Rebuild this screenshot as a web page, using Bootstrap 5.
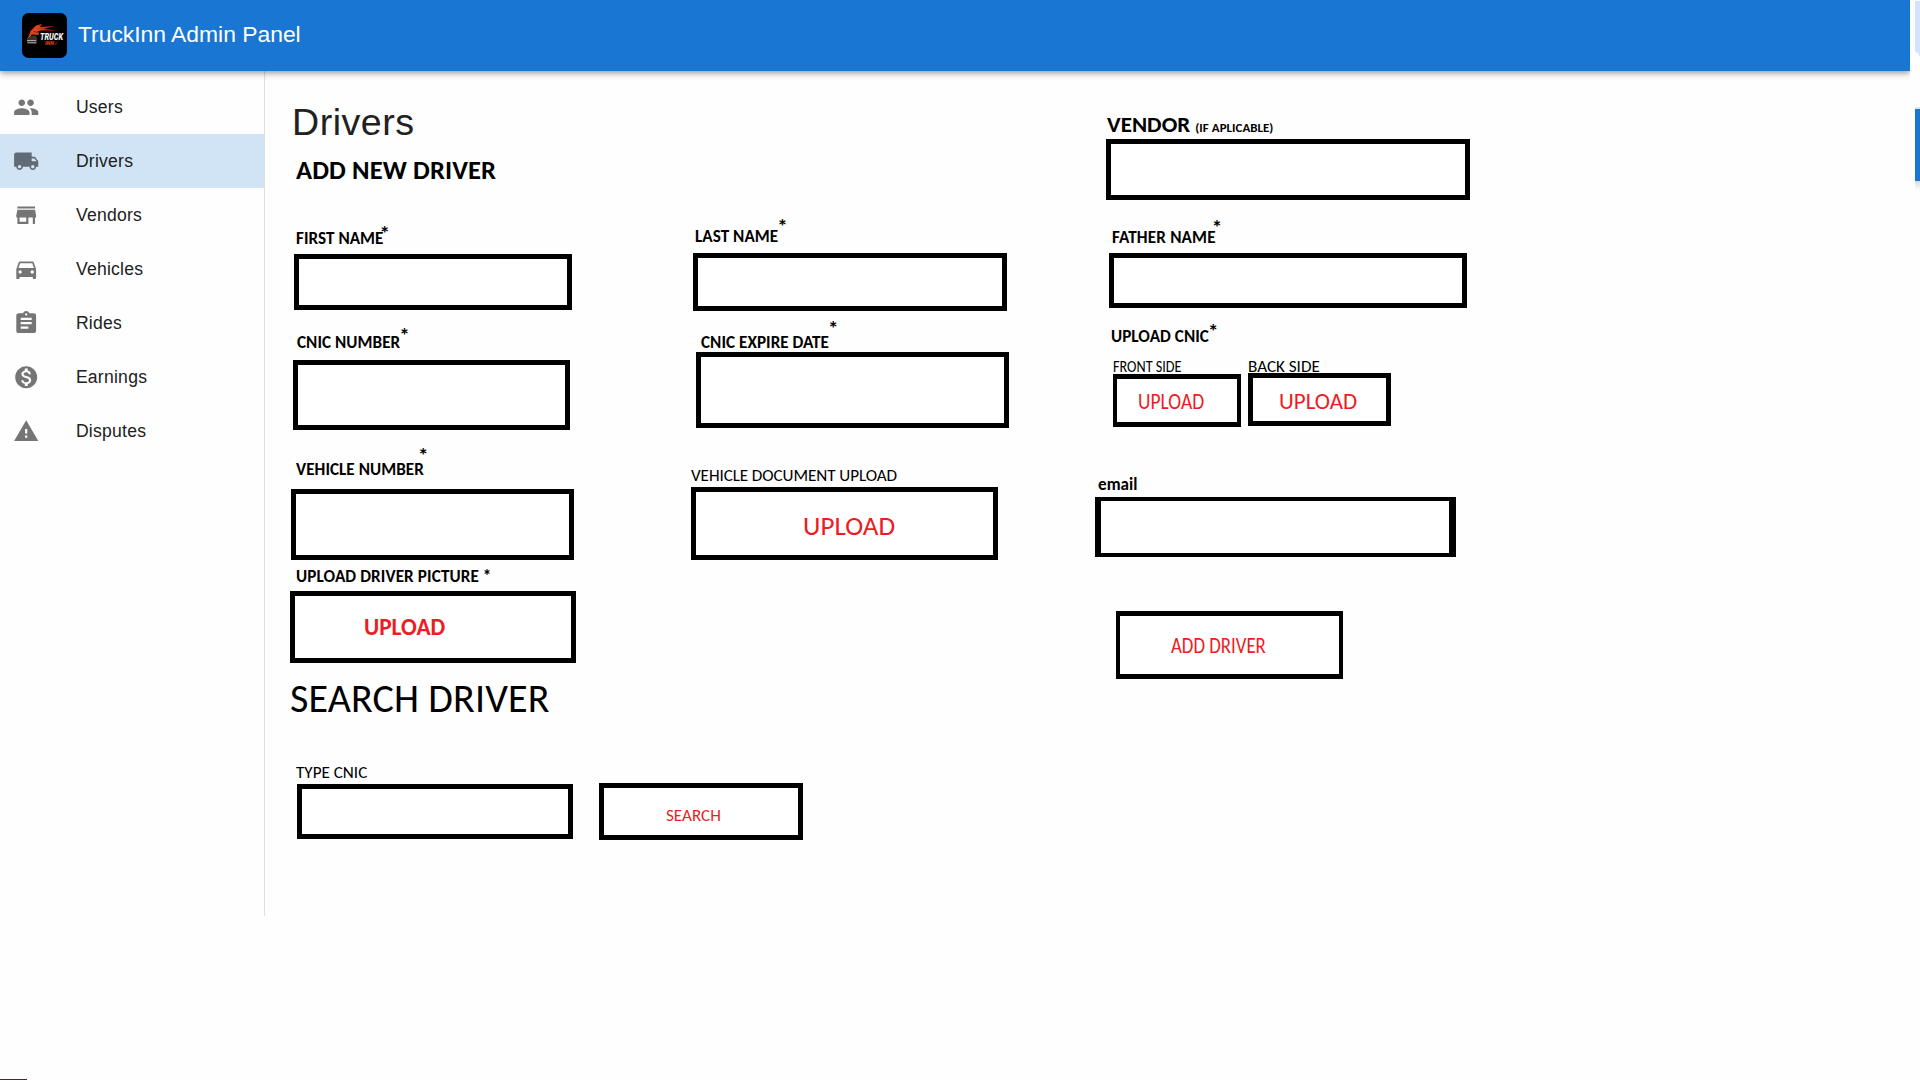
<!DOCTYPE html>
<html lang="en">
<head>
<meta charset="utf-8">
<meta name="viewport" content="width=device-width, initial-scale=1">
<title>TruckInn Admin Panel</title>
<link href="https://cdn.jsdelivr.net/npm/bootstrap@5.3.0/dist/css/bootstrap.min.css" rel="stylesheet">
<style>
  body { font-family: "Liberation Sans", Arial, sans-serif; background: #fefefe; color: #212121; height: 1080px; overflow: hidden; line-height: 1.5; }
  .page { height: 1079px; }
  .frame { width: 1910px; }
  .topbar { height: 71px; padding: 0 0 0 22px; background: #1976d2; box-shadow: 0 2px 4px -1px rgba(0,0,0,.2), 0 4px 5px rgba(0,0,0,.14), 0 1px 10px rgba(0,0,0,.12); z-index: 2; clip-path: inset(0 0 -14px 0); }
  .topbar svg { width: 45px; height: 45px; }
  .topbar .navbar-brand { font-size: 22.9px; letter-spacing: -.02px; margin: 0 0 4px 11px; padding: 0; line-height: 32px; }
  .side { width: 265px; height: 845px; border-right: 1px solid #dedede; padding-top: 9px; }
  .side .nav-link { height: 54px; padding: 0 0 0 13px; gap: 36.5px; color: #212121; font-size: 17.6px; letter-spacing: .23px; }
  .side .nav-link.active { background: #d1e4f6; }
  .side svg { width: 26.4px; height: 26.4px; margin-top: 1px; fill: #757575; }
  .side .active svg { fill: #616b75; }

  .form-area { padding-left: 25px; font-family: Carlito, Calibri, Lato, sans-serif; color: #000; }
  .col-one { width: 401px; }
  .col-two { width: 404px; }
  .page-title { font: 400 37.6px/44px "Liberation Sans", Arial, sans-serif; letter-spacing: .5px; color: #212121; margin: 29px 0 0 2px; }
  .section-title { font-size: 26.6px; line-height: 30px; letter-spacing: .1px; margin: 11px 0 0 6px; font-weight: 700; }
  .search-title { font-size: 40px; line-height: 42px; letter-spacing: .15px; margin: 15px 0 0 0; font-weight: 400; }
  .fl { display: flex; align-items: baseline; height: 16px; padding-top: 1px; font-size: 17.1px; line-height: 16px; letter-spacing: .05px; white-space: nowrap; font-weight: 700; }
  .fl.thin { font-weight: 400; letter-spacing: 0; }
  .fl sup { align-self: flex-start; font-size: 21px; line-height: 16px; top: 0; margin: -6px 0 0 -1px; }
  .box { display: block; border: 5px solid #000; border-radius: 0; background: #fff; padding: 0; text-align: left; line-height: 1; color: #ed1c24; white-space: nowrap; }
  .narrow { display: inline-block; transform-origin: 0 50%; }

  .l-first { margin: 45px 0 8px 6px; }      .b-first { width: 278px; height: 56px; margin-left: 4px; }
  .l-cnic { margin: 24px 0 10px 7px; }      .b-cnic { width: 277px; height: 70px; margin-left: 3px; }
  .l-vnum { margin: 31px 0 12px 6px; }      .b-vnum { width: 283px; height: 71px; margin-left: 1px; }
  .l-pic { margin: 8px 0 7px 6px; letter-spacing: .1px; }
  .b-pic { width: 286px; height: 72px; padding: 2px 0 0 69px; font-size: 23.3px; font-weight: 700; }
  .l-type { margin: 44px 0 4px 6px; }
  .b-type { width: 276px; height: 55px; margin-left: 7px; }
  .l-first sup { margin-left: -4px; }
  .l-cnic sup { margin-top: -8px; }
  .l-vnum sup { margin: -15px 0 0 -6px; }
  .search-row { width: 513px; }
  .b-search { width: 204px; height: 57px; margin-top: -1px; padding: 8px 0 0 62px; font-size: 17.1px; }

  .l-last { margin: 157px 0 9px 4px; }      .b-last { width: 314px; height: 58px; margin-left: 2px; }
  .l-exp { margin: 23px 0 2px 10px; }       .b-exp { width: 313px; height: 76px; margin-left: 5px; }
  .l-doc { margin: 39px 0 4px 0; }          .b-doc { width: 307px; height: 73px; padding: 4px 0 0 107px; font-size: 27.1px; }
  .fl.l-doc { letter-spacing: -.08px; }
  .l-last sup { margin-top: -11px; }
  .l-exp sup { margin-top: -15px; }

  .l-vendor { font-size: 23px; height: 22px; line-height: 22px; padding-top: 0; margin: 42px 0 4px 12px; }
  .l-vendor small { font-size: 12.9px; font-weight: 700; margin-left: 5px; }
  .b-vendor { width: 364px; height: 61px; margin-left: 11px; }
  .l-father { margin: 29px 0 8px 17px; letter-spacing: .17px; }
  .b-father { width: 358px; height: 55px; margin-left: 14px; }
  .l-father sup { margin: -11px 0 0 -4px; }
  .l-upcnic { margin: 20px 0 16px 16px; }
  .sides { margin-left: 18px; gap: 7px; }
  .sides .fl { height: 12px; line-height: 12px; margin-bottom: 2px; }
  .l-front .narrow { transform: scaleX(.83); }
  .b-front { width: 128px; height: 53px; border-width: 5px 4px; padding: 2px 0 0 21px; font-size: 23px; }
  .b-front .narrow { transform: scaleX(.845); }
  .b-back { width: 143px; height: 53px; margin-top: -1px; padding: 4px 0 0 26px; font-size: 23px; }
  .l-email { margin: 49px 0 5px 3px; }      .b-email { width: 361px; height: 60px; border-width: 4px 7px 4px 6px; }
  .b-add { width: 227px; height: 68px; border-width: 5px 4px; margin: 54px 0 0 21px; padding: 0 0 0 51px; font-size: 23px; }
  .b-add .narrow { transform: scaleX(.817); }

  .edge { width: 5px; }
  .edge-tab { height: 56px; margin-top: 1px; background: #d3e3fd; clip-path: polygon(0 0, 100% 0, 100% 100%, 60% 93%, 0 90%); }
  .edge-line { height: 2px; margin-top: 50px; background: #dfe3e3; }
  .edge-bar { height: 72px; background: #1976d2; box-shadow: 0 4px 6px rgba(0,0,0,.3); clip-path: inset(0 0 -12px 0); }
  .foot-mark { width: 27px; height: 1px; background: #3b2e2b; }
</style>
<script src="https://cdn.jsdelivr.net/npm/bootstrap@5.3.0/dist/js/bootstrap.bundle.min.js"></script>
</head>
<body>
<div class="page d-flex justify-content-between">
  <div class="frame d-flex flex-column">
    <nav class="topbar navbar navbar-dark justify-content-start flex-shrink-0 position-relative">
      <svg viewBox="0 0 45 45" aria-label="Truck Inn">
        <defs><linearGradient id="fl" x1="0" x2="1"><stop offset="0" stop-color="#f0501c"/><stop offset="1" stop-color="#7a140c"/></linearGradient></defs>
        <rect width="45" height="45" rx="6.5" fill="#000"/>
        <path d="M10 17.5 14 12.5 20 11 18 14 33 13 22 16 37 17.5 19 17.5 14 19z" fill="url(#fl)"/>
        <path d="M6.500 24 8.500 18 13.500 13 12 19 17 19.500 16.500 22 10 21.500z" fill="#d8401a"/>
        <path d="M5 25 8 23 14 22.500 15.500 27 14 31 5 30z" fill="#3a3332"/>
        <path d="M5 27.500h9M5.500 29.800h9" stroke="#b9b4b2" stroke-width=".9"/>
        <path d="M6.500 24.500 9 22" stroke="#d95b38" stroke-width="1"/>
        <text x="18" y="26.500" font-family="Roboto, sans-serif" font-size="8.600" font-weight="900" font-style="italic" fill="#f4f4f4" textLength="23" lengthAdjust="spacingAndGlyphs">TRUCK</text>
        <text x="23" y="32" font-family="Roboto, sans-serif" font-size="5.800" font-weight="900" font-style="italic" fill="#d23a14" textLength="9" lengthAdjust="spacingAndGlyphs">INN</text>
        <path d="M32 31.500 37 27.500 34 31.500z" fill="#8d1c10"/>
      </svg>
      <span class="navbar-brand text-white">TruckInn Admin Panel</span>
    </nav>
    <div class="d-flex">
      <aside class="side flex-shrink-0">
        <nav class="nav flex-column">
          <a class="nav-link d-flex align-items-center" href="#"><svg viewBox="0 0 24 24"><path d="M16 11c1.660 0 2.990-1.340 2.990-3S17.660 5 16 5c-1.660 0-3 1.340-3 3s1.340 3 3 3zm-8 0c1.660 0 2.990-1.340 2.990-3S9.660 5 8 5C6.340 5 5 6.340 5 8s1.340 3 3 3zm0 2c-2.330 0-7 1.170-7 3.500V19h14v-2.500c0-2.330-4.670-3.500-7-3.500zm8 0c-.29 0-.62.02-.97.05 1.160.84 1.970 1.970 1.970 3.450V19h6v-2.500c0-2.330-4.670-3.500-7-3.500z"/></svg>Users</a>
          <a class="nav-link active d-flex align-items-center" href="#"><svg viewBox="0 0 24 24"><path d="M20 8h-3V4H3c-1.100 0-2 .9-2 2v11h2c0 1.660 1.340 3 3 3s3-1.340 3-3h6c0 1.660 1.340 3 3 3s3-1.340 3-3h2v-5l-3-4zM6 18.500c-.83 0-1.500-.67-1.500-1.500s.67-1.500 1.500-1.500 1.500.67 1.500 1.500-.67 1.500-1.500 1.500zm13.500-9l1.960 2.500H17V9.500h2.500zm-1.500 9c-.83 0-1.500-.67-1.500-1.500s.67-1.500 1.500-1.500 1.500.67 1.500 1.500-.67 1.500-1.500 1.500z"/></svg>Drivers</a>
          <a class="nav-link d-flex align-items-center" href="#"><svg viewBox="0 0 24 24"><path d="M20 4H4v2h16V4zm1 10v-2l-1-5H4l-1 5v2h1v6h10v-6h4v6h2v-6h1zm-9 4H6v-4h6v4z"/></svg>Vendors</a>
          <a class="nav-link d-flex align-items-center" href="#"><svg viewBox="0 0 24 24"><path d="M18.920 6.010C18.720 5.420 18.160 5 17.500 5h-11c-.66 0-1.210.42-1.420 1.010L3 12v8c0 .55.45 1 1 1h1c.55 0 1-.45 1-1v-1h12v1c0 .55.45 1 1 1h1c.55 0 1-.45 1-1v-8l-2.080-5.990zM6.500 16c-.83 0-1.500-.67-1.500-1.500S5.670 13 6.500 13s1.500.67 1.500 1.500S7.330 16 6.500 16zm11 0c-.83 0-1.500-.67-1.500-1.500s.67-1.500 1.500-1.500 1.500.67 1.500 1.500-.67 1.500-1.500 1.500zM5 11l1.500-4.500h11L19 11H5z"/></svg>Vehicles</a>
          <a class="nav-link d-flex align-items-center" href="#"><svg viewBox="0 0 24 24"><path d="M19 3h-4.180C14.400 1.840 13.300 1 12 1c-1.300 0-2.400.84-2.820 2H5c-1.100 0-2 .9-2 2v14c0 1.100.9 2 2 2h14c1.100 0 2-.9 2-2V5c0-1.100-.9-2-2-2zm-7 0c.55 0 1 .45 1 1s-.45 1-1 1-1-.45-1-1 .45-1 1-1zm2 14H7v-2h7v2zm3-4H7v-2h10v2zm0-4H7V7h10v2z"/></svg>Rides</a>
          <a class="nav-link d-flex align-items-center" href="#"><svg viewBox="0 0 24 24"><path d="M12 2C6.480 2 2 6.480 2 12s4.480 10 10 10 10-4.480 10-10S17.520 2 12 2zm1.410 16.090V20h-2.670v-1.930c-1.710-.36-3.160-1.460-3.270-3.400h1.960c.1 1.050.82 1.870 2.650 1.870 1.960 0 2.400-.98 2.400-1.590 0-.83-.44-1.610-2.670-2.140-2.480-.6-4.180-1.620-4.180-3.670 0-1.720 1.390-2.840 3.110-3.210V4h2.670v1.950c1.860.45 2.790 1.860 2.850 3.390H14.300c-.05-1.110-.64-1.870-2.220-1.870-1.500 0-2.400.68-2.400 1.640 0 .84.65 1.390 2.670 1.910s4.180 1.390 4.180 3.910c-.01 1.830-1.380 2.830-3.120 3.160z"/></svg>Earnings</a>
          <a class="nav-link d-flex align-items-center" href="#"><svg viewBox="0 0 24 24"><path d="M1 21h22L12 2 1 21zm12-3h-2v-2h2v2zm0-4h-2v-4h2v4z"/></svg>Disputes</a>
        </nav>
      </aside>
      <main class="form-area d-flex align-items-start">
        <section class="col-one">
          <h1 class="page-title">Drivers</h1>
          <h2 class="section-title">ADD NEW DRIVER</h2>
          <label class="fl l-first" for="first">FIRST NAME<sup>*</sup></label>
          <input class="box b-first" id="first">
          <label class="fl l-cnic" for="cnic">CNIC NUMBER<sup>*</sup></label>
          <input class="box b-cnic" id="cnic">
          <label class="fl l-vnum" for="vnum">VEHICLE NUMBER<sup>*</sup></label>
          <input class="box b-vnum" id="vnum">
          <label class="fl l-pic">UPLOAD DRIVER PICTURE *</label>
          <button class="box b-pic" type="button">UPLOAD</button>
          <h2 class="search-title">SEARCH DRIVER</h2>
          <label class="fl thin l-type" for="type">TYPE CNIC</label>
          <div class="search-row d-flex align-items-start justify-content-between">
            <input class="box b-type" id="type">
            <button class="box b-search" type="button">SEARCH</button>
          </div>
        </section>
        <section class="col-two">
          <label class="fl l-last" for="last">LAST NAME<sup>*</sup></label>
          <input class="box b-last" id="last">
          <label class="fl l-exp" for="exp">CNIC EXPIRE DATE<sup>*</sup></label>
          <input class="box b-exp" id="exp">
          <label class="fl thin l-doc">VEHICLE DOCUMENT UPLOAD</label>
          <button class="box b-doc" type="button">UPLOAD</button>
        </section>
        <section>
          <label class="fl l-vendor" for="vendor">VENDOR <small>(IF APLICABLE)</small></label>
          <input class="box b-vendor" id="vendor">
          <label class="fl l-father" for="father">FATHER NAME<sup>*</sup></label>
          <input class="box b-father" id="father">
          <label class="fl l-upcnic">UPLOAD CNIC<sup>*</sup></label>
          <div class="sides d-flex align-items-start">
            <div>
              <label class="fl thin l-front"><span class="narrow">FRONT SIDE</span></label>
              <button class="box b-front" type="button"><span class="narrow">UPLOAD</span></button>
            </div>
            <div>
              <label class="fl thin">BACK SIDE</label>
              <button class="box b-back" type="button">UPLOAD</button>
            </div>
          </div>
          <label class="fl l-email" for="email">email</label>
          <input class="box b-email" id="email">
          <button class="box b-add" type="button"><span class="narrow">ADD DRIVER</span></button>
        </section>
      </main>
    </div>
  </div>
  <div class="edge">
    <div class="edge-tab"></div>
    <div class="edge-line"></div>
    <div class="edge-bar"></div>
  </div>
</div>
<div class="foot-mark"></div>
</body>
</html>
